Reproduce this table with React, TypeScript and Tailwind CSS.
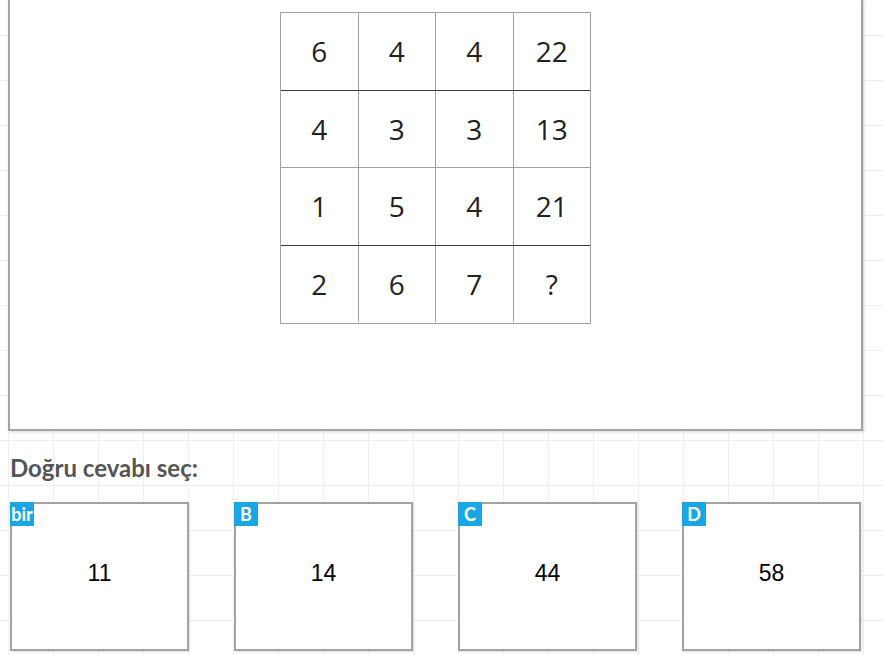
import React from 'react';

const rows = [
  ['6', '4', '4', '22'],
  ['4', '3', '3', '13'],
  ['1', '5', '4', '21'],
  ['2', '6', '7', '?'],
];

const rowLine = ['border-[#3a3a3a]', 'border-[#a0a0a0]', 'border-[#3a3a3a]', 'border-transparent'];

const options = [
  { label: 'bir', value: '11' },
  { label: 'B', value: '14' },
  { label: 'C', value: '44' },
  { label: 'D', value: '58' },
];

const App: React.FC = () => {
  return (
    <div className="h-[655px] w-full overflow-hidden bg-white bg-[linear-gradient(to_right,#efefef_1px,transparent_1px),linear-gradient(to_bottom,#efefef_1px,transparent_1px)] bg-[size:45px_45px] bg-[position:8px_35px] font-['Lato',sans-serif]">
      <div className="ml-[8px] w-[855px] h-[431px] bg-white border-x-2 border-b-2 border-[#a3a3a3] shadow-[1px_1px_3px_rgba(0,0,0,0.15)] pt-[12px]">
        <div className="mx-auto w-[311px] border border-[#a0a0a0] font-['Open_Sans',sans-serif] text-[28px] text-[#222]">
          {rows.map((row, i) => (
            <div key={i} className={`flex h-[77.5px] border-b ${rowLine[i]}`}>
              {row.map((n, j) => (
                <div
                  key={j}
                  className={`flex flex-1 items-center justify-center ${j < 3 ? 'border-r border-[#a0a0a0]' : ''}`}
                >
                  {n}
                </div>
              ))}
            </div>
          ))}
        </div>
      </div>

      <h2 className="mt-[22px] ml-[10px] text-[24px] leading-[29px] font-bold text-[#555]">Doğru cevabı seç:</h2>

      <div className="mt-[20px] ml-[10px] flex gap-[45px]">
        {options.map((o) => (
          <div
            key={o.label}
            className="relative flex h-[149px] w-[179px] items-center justify-center border-2 border-[#a3a3a3] bg-white pb-[6px] shadow-[1px_1px_2px_rgba(0,0,0,0.12)]"
          >
            <span className="absolute -left-[2px] -top-[2px] flex h-[24px] min-w-[24px] items-center justify-center bg-[#1aa6e2] px-[1px] pb-[1px] text-[18px] font-bold leading-none text-white">
              {o.label}
            </span>
            <span className="font-['Liberation_Sans',Arial,sans-serif] text-[23px] text-black">{o.value}</span>
          </div>
        ))}
      </div>
    </div>
  );
};

export default App;
